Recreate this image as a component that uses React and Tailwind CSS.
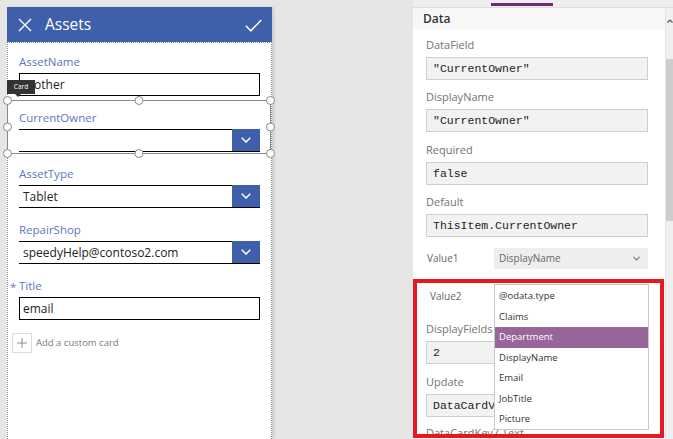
import React from 'react';

const Chevron = ({ className }) => (
  <svg viewBox="0 0 10 6" className={className} fill="none" stroke="currentColor" strokeWidth="1.5">
    <path d="M0.7 0.7 L5 5 L9.3 0.7" />
  </svg>
);

const Dropdown = ({ value }) => (
  <div className="flex h-[23px] border-b border-black">
    <div className="flex-1 border-t border-black flex items-center pl-[4px] text-[12px] text-[#222]">{value}</div>
    <div className="w-[28px] bg-[#3e5fa9] flex items-center justify-center">
      <Chevron className="w-[10px] h-[6px] text-white" />
    </div>
  </div>
);

const TextInput = ({ value }) => (
  <div className="h-[23px] border-[1.5px] border-black flex items-center pl-[3px] text-[12px] text-[#222]">{value}</div>
);

const Card = ({ label, required, children, extra }) => (
  <div className="relative h-[56px] pt-[10px]">
    <div className="relative h-[18px] leading-[18px] text-[11.5px] text-[#5a78bf]">
      {required && <span className="absolute -left-[9px] top-[1px]">*</span>}
      {label}
    </div>
    <div className="mt-[2px]">{children}</div>
    {extra}
  </div>
);

const Handle = ({ className }) => (
  <div className={`absolute w-[9px] h-[9px] rounded-full bg-white border border-[#8a8a8a] ${className}`} />
);

// selection frame + "Card" tooltip drawn over the selected card
const Selection = () => (
  <>
    <div className="absolute -left-[12px] -right-[11px] top-[0.5px] h-[54.5px] border border-[#8a8a8a] pointer-events-none">
      <Handle className="-top-[5px] -left-[5px]" />
      <Handle className="-top-[5px] left-1/2 -translate-x-1/2" />
      <Handle className="-top-[5px] -right-[5px]" />
      <Handle className="top-1/2 -translate-y-1/2 -left-[5px]" />
      <Handle className="top-1/2 -translate-y-1/2 -right-[5px]" />
      <Handle className="-bottom-[5px] -left-[5px]" />
      <Handle className="-bottom-[5px] left-1/2 -translate-x-1/2" />
      <Handle className="-bottom-[5px] -right-[5px]" />
    </div>
    <div className="absolute -left-[12px] -top-[19px] w-[28px] h-[14px] bg-[#333] text-white text-[6.5px] flex items-center justify-center">
      Card
      <div className="absolute left-[8px] top-[14px] w-0 h-0 border-l-[3px] border-r-[3px] border-t-[3px] border-l-transparent border-r-transparent border-t-[#333]" />
    </div>
  </>
);

const Field = ({ label, value, className = '' }) => (
  <div className={className}>
    <div className="h-[20px] leading-[20px] text-[11px] text-[#737373]">{label}</div>
    <div className="mt-[2px] h-[23px] bg-[#f2f2f2] border border-[#cfcfcf] flex items-center pl-[6px] text-[11.5px] text-[#222] font-['Liberation_Mono',monospace] overflow-hidden whitespace-nowrap">
      {value}
    </div>
  </div>
);

const items = ['@odata.type', 'Claims', 'Department', 'DisplayName', 'Email', 'JobTitle', 'Picture'];

export default function App() {
  return (
    <div className="w-[673px] h-[439px] bg-[#e6e6e6] flex overflow-hidden font-['Open_Sans','Noto_Sans',sans-serif]">
      {/* form canvas */}
      <div className="w-[413px] flex-none pl-[7px] pt-[7px]">
        <div className="w-[265px] h-full flex flex-col shadow-[2px_0_3px_rgba(0,0,0,0.12)]">
          <div className="h-[36px] flex-none bg-[#3e5fa9] flex items-center pl-[11px] pr-[10px] text-white">
            <svg viewBox="0 0 14 14" className="w-[14px] h-[14px]" fill="none" stroke="currentColor" strokeWidth="1.4">
              <path d="M1 1 L13 13 M13 1 L1 13" />
            </svg>
            <span className="ml-[13px] text-[15.5px] leading-none">Assets</span>
            <svg viewBox="0 0 16 12" className="ml-auto w-[17px] h-[13px]" fill="none" stroke="currentColor" strokeWidth="1.4">
              <path d="M0.8 6.2 L5.5 11 L15.3 0.8" />
            </svg>
          </div>
          <div className="flex-1 bg-white border border-b-0 border-dotted border-[#8c8c8c] pl-[11px] pr-[11px] -mt-px">
            <Card label="AssetName">
              <TextInput value="mother" />
            </Card>
            <Card label="CurrentOwner" extra={<Selection />}>
              <Dropdown value="" />
            </Card>
            <Card label="AssetType">
              <Dropdown value="Tablet" />
            </Card>
            <Card label="RepairShop">
              <Dropdown value="speedyHelp@contoso2.com" />
            </Card>
            <Card label="Title" required>
              <TextInput value="email" />
            </Card>
            <div className="mt-[10px] -ml-[7px] flex items-center">
              <div className="w-[20px] h-[20px] border border-[#dcdcdc] flex items-center justify-center">
                <svg viewBox="0 0 10 10" className="w-[10px] h-[10px]" fill="none" stroke="#8a8a8a" strokeWidth="1">
                  <path d="M5 0 V10 M0 5 H10" />
                </svg>
              </div>
              <span className="ml-[4px] text-[9.5px] text-[#7a7a7a]">Add a custom card</span>
            </div>
          </div>
        </div>
      </div>

      {/* properties panel */}
      <div className="relative w-[260px] flex-none h-full bg-white flex flex-col">
        <div className="h-[8px] flex-none bg-[#efefef] border-b border-[#dedede] pl-[78px]">
          <div className="w-[62px] h-[3px] mt-[3px] bg-[#742774]" />
        </div>
        <div className="flex flex-1 min-h-0">
          <div className="flex-1 overflow-hidden">
            <div className="h-[21px] bg-[#f7f7f7] pl-[10px] flex items-center text-[12px] font-semibold text-[#333]">Data</div>
            <div className="pl-[13px] pr-[17px]">
              <Field label="DataField" value={'"CurrentOwner"'} className="mt-[6px]" />
              <Field label="DisplayName" value={'"CurrentOwner"'} className="mt-[7px]" />
              <Field label="Required" value="false" className="mt-[8px]" />
              <Field label="Default" value="ThisItem.CurrentOwner" className="mt-[7px]" />
              <div className="flex items-center h-[21px] mt-[11px]">
                <div className="w-[68px] pl-[1px] text-[10px] text-[#666]">Value1</div>
                <div className="flex-1 h-full bg-[#eeeeee] flex items-center justify-between pl-[5px] pr-[8px] text-[10px] text-[#666]">
                  DisplayName
                  <Chevron className="w-[7px] h-[5px] text-[#777]" />
                </div>
              </div>
              <div className="flex items-center h-[21px] mt-[17px]">
                <div className="w-[68px] pl-[4px] text-[10px] text-[#666]">Value2</div>
                <div className="flex-1 h-full bg-[#eeeeee]" />
              </div>
              <Field label="DisplayFields" value="2" className="mt-[12px]" />
              <Field label="Update" value="DataCardValue7" className="mt-[8px]" />
              <div className="mt-[6px] h-[20px] leading-[20px] text-[11px] text-[#737373]">DataCardKey7.Text</div>
            </div>
          </div>
          <div className="w-[8px] flex-none bg-[#f0f0f0] border-l border-[#e6e6e6] flex flex-col items-center">
            <svg viewBox="0 0 6 4" className="w-[6px] h-[4px] mt-[11px]" fill="none" stroke="#555" strokeWidth="1.2">
              <path d="M0.5 3.5 L3 1 L5.5 3.5" />
            </svg>
            <div className="w-full h-[162px] mt-[36px] bg-[#cdcdcd]" />
          </div>
        </div>

        {/* red highlight */}
        <div className="absolute left-0 top-[279px] w-[251px] h-[159px] border-4 border-[#e9171f] pointer-events-none" />

        {/* open dropdown list */}
        <div className="absolute left-[81px] top-[284px] w-[155px] h-[146px] bg-white border border-[#c8c8c8] pt-[1px]">
          {items.map((it) => (
            <div
              key={it}
              className={`h-[20.5px] flex items-center pl-[4px] text-[9.5px] ${it === 'Department' ? 'bg-[#97659a] text-white' : 'text-[#333]'}`}
            >
              {it}
            </div>
          ))}
        </div>
      </div>
    </div>
  );
}
